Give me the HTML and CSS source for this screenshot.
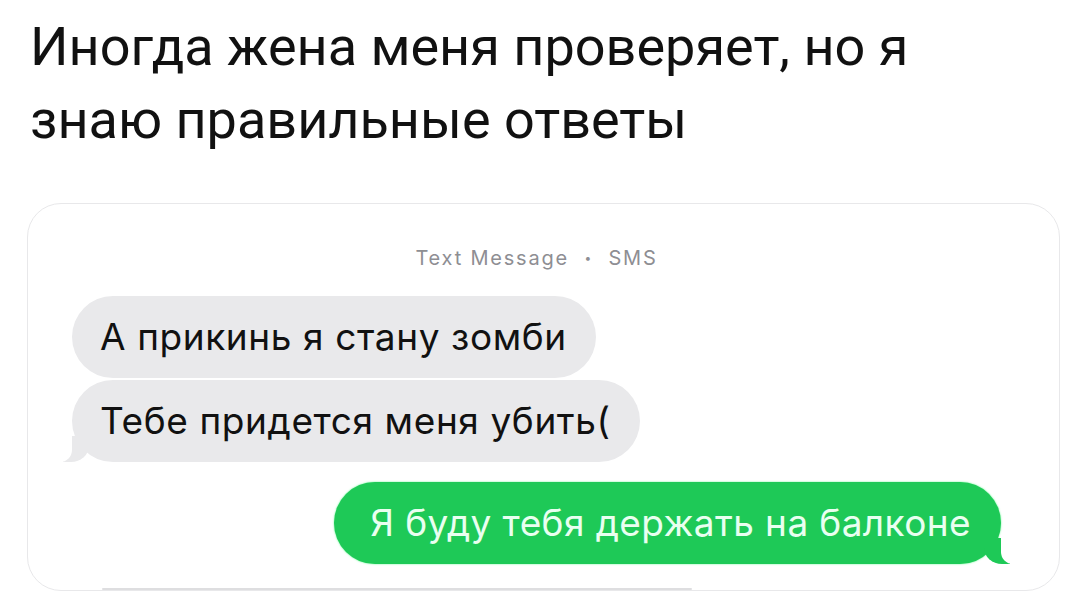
FILE: index.html
```html
<!DOCTYPE html>
<html lang="ru">
<head>
  <meta charset="UTF-8" />
  <title>Иногда жена меня проверяет</title>
  <link rel="stylesheet" href="styles.css">
</head>
<body>
  <div class="post">
    <h1 class="title">Иногда жена меня проверяет, но я знаю правильные ответы</h1>
    <div class="chat">
      <div class="meta">Text Message <span class="dot">•</span> SMS</div>
      <div class="msg in">А прикинь я стану зомби</div>
      <div class="msg in tail">Тебе придется меня убить(</div>
      <div class="msg out tail">Я буду тебя держать на балконе</div>
      <div class="msg in next"></div>
    </div>
  </div>
</body>
</html>
```

FILE: styles.css
```css
body {
  margin: 0;
  background: #fff;
  color: #111;
  font-family: Roboto, "Noto Sans", sans-serif;
}
.post {
  padding: 10px 20px 0 27px;
}
.title {
  margin: 0 0 0 3px;
  max-width: 960px;
  font-size: 54px;
  font-weight: 400;
  line-height: 73px;
}
.chat {
  margin-top: 47px;
  height: 386px;
  border: 1.5px solid #e8e8ea;
  border-radius: 34px;
  padding: 0 58px 0 44px;
  overflow: hidden;
  display: flex;
  flex-direction: column;
  font-family: Inter, "Liberation Sans", sans-serif;
}
.meta {
  text-align: center;
  color: #8e8e93;
  font-size: 20px;
  letter-spacing: 1.8px;
  padding: 42px 0 26px;
}
.dot {
  font-size: 12px;
  vertical-align: 3px;
  margin: 0 8px;
}
.msg {
  position: relative;
  align-self: flex-start;
  background: #e9e9eb;
  color: #111;
  font-size: 37px;
  line-height: 82px;
  padding: 0 29px 0 28px;
  border-radius: 41px;
  letter-spacing: 0.6px;
}
.msg + .msg {
  margin-top: 2px;
}
.out {
  align-self: flex-end;
  margin-top: 20px !important;
  background: #1ec957;
  color: #e9fff0;
  padding: 0 30px 0 36px;
  letter-spacing: 0.4px;
  box-shadow: 0 0 2px #5df58c;
}
.next {
  margin-top: 24px !important;
  width: 590px;
  height: 80px;
  padding: 0;
  margin-left: 30px;
  background: #dedee0;
}
.tail::before,
.tail::after {
  content: "";
  position: absolute;
  bottom: 0;
  height: 26px;
}
.in.tail::before {
  left: -9px;
  width: 26px;
  background: #e9e9eb;
  border-bottom-right-radius: 18px 16px;
}
.in.tail::after {
  left: -28px;
  width: 28px;
  background: #fff;
  border-bottom-right-radius: 12px;
}
.out.tail::before {
  right: -9px;
  width: 26px;
  background: #1ec957;
  border-bottom-left-radius: 18px 16px;
}
.out.tail::after {
  right: -28px;
  width: 28px;
  background: #fff;
  border-bottom-left-radius: 12px;
}
```
